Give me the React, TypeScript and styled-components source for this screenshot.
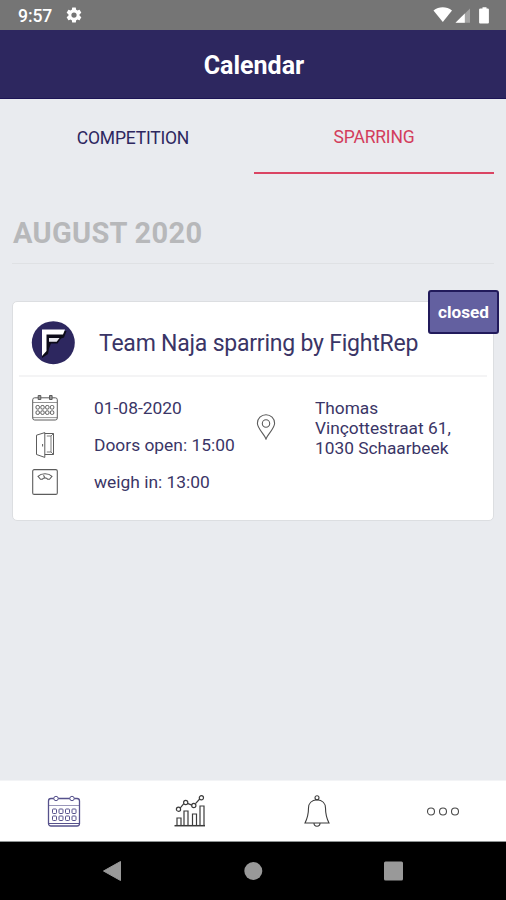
import React from 'react';
import styled, { createGlobalStyle } from 'styled-components';

const navy = '#2d275f';
const ink = '#3a3566';
const line = '#5c5c5c';

const GlobalStyle = createGlobalStyle`
  * { box-sizing: border-box; }
  body { margin: 0; background: #e9ebef; font-family: Roboto, "Liberation Sans", sans-serif; }
  svg { display: block; flex: none; }
`;

const Screen = styled.div`
  width: 506px;
  height: 900px;
  display: flex;
  flex-direction: column;
  overflow: hidden;
  background: #e9ebef;
`;

const StatusBar = styled.div`
  height: 30px;
  flex: none;
  display: flex;
  align-items: center;
  justify-content: space-between;
  padding: 0 15px 0 18px;
  background: #757575;
  color: #fff;
`;

const Clock = styled.span`
  width: 34px;
  font-size: 17.6px;
  font-weight: 500;
  line-height: 20px;
  letter-spacing: -0.1px;
  padding-top: 1px;
`;

const StatusGroup = styled.div<{ $gap: number }>`
  display: flex;
  align-items: center;
  gap: ${p => p.$gap}px;
`;

const Header = styled.header`
  height: 69px;
  flex: none;
  display: flex;
  align-items: center;
  justify-content: center;
  background: ${navy};
  border-bottom: 1px solid #1c1455;
`;

const Title = styled.h1`
  margin: 4px 0 0 2px;
  font-size: 25px;
  line-height: 30px;
  font-weight: 700;
  color: #fff;
`;

const Content = styled.main`
  flex: 1;
  padding: 0 12px;
`;

const Tabs = styled.div`
  display: grid;
  grid-template-columns: 242px 240px;
  height: 75px;
`;

const Tab = styled.div<{ $active?: boolean }>`
  display: flex;
  justify-content: center;
  padding-top: ${p => (p.$active ? 28 : 29)}px;
  font-size: 17.5px;
  letter-spacing: -0.2px;
  line-height: 21px;
  color: ${p => (p.$active ? '#d33d5c' : navy)};
  border-bottom: ${p => (p.$active ? '2px solid #da4463' : '0')};
`;

const Month = styled.h2`
  margin: 0;
  height: 90px;
  padding: 42px 0 0 1px;
  font-size: 29px;
  letter-spacing: 0.3px;
  line-height: 34px;
  font-weight: 700;
  color: #b7b8ba;
  border-bottom: 1px solid #dfe1e4;
`;

const Card = styled.section`
  position: relative;
  height: 220px;
  margin: 37px 0 0;
  padding: 0 6px;
  background: #fff;
  border: 1px solid #dcdee1;
  border-radius: 5px;
`;

const Badge = styled.div`
  position: absolute;
  top: -12px;
  right: -6px;
  width: 71px;
  height: 44px;
  display: flex;
  align-items: center;
  justify-content: center;
  background: #6360a0;
  border: 2px solid #211a5b;
  border-radius: 3px;
  color: #fff;
  font-size: 17.2px;
  font-weight: 700;
`;

const CardHead = styled.div`
  display: flex;
  align-items: center;
  gap: 24px;
  height: 75px;
  padding: 8px 0 0 12px;
  border-bottom: 2px solid #f4f4f5;
`;

const CardTitle = styled.h3`
  margin: 2px 0 0;
  font-size: 23px;
  letter-spacing: -0.22px;
  line-height: 30px;
  font-weight: 400;
  color: ${ink};
  white-space: nowrap;
`;

const CardBody = styled.div`
  display: grid;
  grid-template-columns: 237px 1fr;
  padding-top: 12px;
`;

const Facts = styled.div`
  display: flex;
  flex-direction: column;
`;

const Fact = styled.div`
  height: 37px;
  display: flex;
  align-items: center;
  gap: 36px;
  padding-left: 13px;
  font-size: 17.4px;
  color: ${ink};
  white-space: nowrap;
`;

const Place = styled.div`
  display: flex;
  align-items: flex-start;
  gap: 39px;
  padding-top: 9px;
`;

const PinSlot = styled.div`
  padding-top: 16px;
`;

const Address = styled.address`
  font-style: normal;
  font-size: 17.3px;
  line-height: 20px;
  color: ${ink};
  white-space: nowrap;
`;

const TabBar = styled.nav`
  height: 62px;
  flex: none;
  display: grid;
  grid-template-columns: repeat(4, 1fr);
  place-items: center;
  padding-left: 1px;
  background: #fff;
  border-top: 1px solid #f3f4f6;
  border-bottom: 1px solid #8f9494;
`;

const SystemBar = styled.div`
  height: 58px;
  flex: none;
  display: flex;
  justify-content: space-between;
  padding: 18px 102px 0 102px;
  background: #000;
`;

const Gear = () => (
  <svg width="18" height="18" viewBox="0 0 24 24" fill="#fff">
    <path d="M19.4 13c.04-.3.06-.65.06-1s-.02-.67-.07-1l2.1-1.65a.5.5 0 0 0 .12-.64l-2-3.46a.5.5 0 0 0-.6-.22l-2.5 1a7.3 7.3 0 0 0-1.7-.98l-.37-2.65A.5.5 0 0 0 14 2h-4a.5.5 0 0 0-.48.4l-.37 2.65c-.6.25-1.17.58-1.7.98l-2.48-1a.5.5 0 0 0-.61.22l-2 3.46a.5.5 0 0 0 .12.64L4.6 11a8 8 0 0 0 0 2l-2.12 1.65a.5.5 0 0 0-.12.64l2 3.46c.13.22.38.3.61.22l2.48-1c.52.4 1.08.73 1.7.98l.37 2.65c.04.24.24.4.48.4h4c.24 0 .45-.16.48-.4l.37-2.65c.62-.25 1.18-.58 1.7-.98l2.48 1c.23.08.48 0 .61-.22l2-3.46a.5.5 0 0 0-.12-.64zM12 15.5a3.5 3.5 0 1 1 0-7 3.5 3.5 0 0 1 0 7z" />
  </svg>
);

const Signals = () => (
  <svg width="58" height="20" viewBox="0 0 58 20">
    <path d="M0.5 5.5C6 1.3 13.5 1.3 19 5.5L9.8 17z" fill="#fff" />
    <path d="M37 3.5V17.8H22.5z" fill="#a3a3a3" />
    <path d="M31.8 8.6V17.8H22.5z" fill="#fff" />
    <path d="M47.500 3.500h2V2.300h4v1.200h1.200q1.200 0 1.200 1V17.500q0 1-1 1h-7.800q-1 0-1-1V4.500q0-1 1.400-1z" fill="#fff" />
  </svg>
);

const Logo = () => (
  <svg width="44" height="44" viewBox="0 0 44 44">
    <circle cx="22.3" cy="21.7" r="21.5" fill={navy} />
    <path d="M12 10h23.500l-2.500 6.500-3 1-3.500 5h-6.500l-2 5-1 5.500-6 4z" fill="#0c0b18" />
    <path d="M11 8.500h23L32 13.500H15.500V30L11 35z" fill="#fff" />
    <path d="M18 17h10.500l-2.800 3.700H18z" fill="#e8e8ee" />
  </svg>
);

const SmallCalendar = () => (
  <svg width="26" height="26" viewBox="0 0 26 26" fill="none" stroke={line} strokeWidth="1">
    <rect x="0.7" y="2.8" width="24.6" height="22.2" rx="2" />
    <path d="M1 7.5h24M1 22.6h24" opacity="0.65" />
    <path d="M6.2 0.5h2.6v4H6.2zM17.5 0.5h2.6v4h-2.6z" fill="#999" />
    {[4, 8.8, 13.6, 18.4].map(x =>
      [10.5, 15.8].map(y => <rect key={`${x}-${y}`} x={x} y={y} width="3.4" height="3.6" rx="1.3" />),
    )}
  </svg>
);

const Door = () => (
  <svg width="26" height="26" viewBox="0 0 26 26" fill="none" stroke={line} strokeWidth="1">
    <path d="M12.8 0.6v24.8L4.5 22.5V3.2zM12.8 1.5H21.5V22.5H12.8" />
    <path d="M14.8 4h4.2v16h-4.2M19 4l2.5-2.5M19 20l2.5 2.5" opacity="0.8" />
    <path d="M10.6 12v2.5" />
  </svg>
);

const Scale = () => (
  <svg width="26" height="26" viewBox="0 0 26 26" fill="none" stroke={line} strokeWidth="1.1">
    <rect x="0.7" y="0.6" width="24.6" height="24.8" rx="1.5" />
    <path d="M6 7.3C9.5 3.8 16.5 3.8 20 7.3L17.5 10.3H15.8C14.5 8.6 11.5 8.6 10.2 10.3H8.5z" />
    <path d="M13 8.9l-1.5-2.7" />
  </svg>
);

const Pin = () => (
  <svg width="20" height="26" viewBox="0 0 20 26" fill="none" stroke={line} strokeWidth="1.1">
    <path d="M10 25C8.5 20.5 1.4 14.5 1.4 9.3a8.6 8.6 0 0 1 17.2 0C18.6 14.5 11.5 20.5 10 25z" />
    <circle cx="10" cy="9.5" r="3.7" />
  </svg>
);

const NavCalendar = () => (
  <svg width="34" height="34" viewBox="0 0 34 34" fill="none" stroke="#56518c" strokeWidth="1">
    <rect x="1.5" y="4.5" width="31" height="27.5" rx="2.5" strokeWidth="1.3" />
    <path d="M2 11.5h30" opacity="0.6" />
    <path d="M2 29.5h30" />
    <circle cx="9" cy="4.5" r="2.2" fill="#fff" />
    <circle cx="25" cy="4.5" r="2.2" fill="#fff" />
    {[5.5, 12, 18.5, 25].map(x =>
      [15, 22].map(y => <rect key={`${x}-${y}`} x={x} y={y} width="4" height="4.5" rx="0.8" />),
    )}
  </svg>
);

const NavChart = () => (
  <svg width="34" height="34" viewBox="0 0 34 34" fill="none" stroke="#3c3c3c" strokeWidth="1.2">
    <path d="M1.5 31.7H32" strokeWidth="1.5" />
    <path d="M4 31.5v-7.5h4v7.5M11 31.5V17h4v14.5M19.5 31.5V20h4v11.5M27 31.5V12h4v19.5" />
    <path d="M7.3 13.8l3.5-4.1M14.4 9.4l4.5 1.7M22.5 9.7l4.2-4.7" />
    <circle cx="5.5" cy="15.2" r="2.1" />
    <circle cx="12.7" cy="8.5" r="2.1" />
    <circle cx="20.8" cy="11.5" r="2.1" />
    <circle cx="28.4" cy="3.8" r="2.1" />
  </svg>
);

const NavBell = () => (
  <svg width="34" height="34" viewBox="0 0 34 34" fill="none" stroke="#3c3c3c" strokeWidth="1.1">
    <circle cx="17" cy="3.7" r="2" />
    <path d="M17 5.7C11.5 6 8.5 9.5 8.500 14C8.500 21 7.800 23.500 5 29H29C26.200 23.500 25.500 21 25.500 14C25.500 9.500 22.500 6 17 5.700z" />
    <path d="M14 29c0 4.300 6 4.300 6 0" />
  </svg>
);

const NavMore = () => (
  <svg width="34" height="34" viewBox="0 0 34 34" fill="none" stroke="#4a4a4a" strokeWidth="1.1">
    <circle cx="5" cy="17.5" r="3.5" />
    <circle cx="17" cy="17.5" r="3.5" />
    <circle cx="29" cy="17.5" r="3.5" />
  </svg>
);

const BackKey = () => (
  <svg width="20" height="22" viewBox="0 0 20 22">
    <path d="M1.5 11L18.5 1.5V20.5z" fill="#999" stroke="#999" strokeLinejoin="round" />
  </svg>
);

const HomeKey = () => (
  <svg width="20" height="22" viewBox="0 0 20 22">
    <circle cx="10.3" cy="11" r="9" fill="#999" />
  </svg>
);

const RecentKey = () => (
  <svg width="20" height="22" viewBox="0 0 20 22">
    <rect x="0" y="1.5" width="19" height="19" rx="1.5" fill="#999" />
  </svg>
);

const facts = [
  { icon: <SmallCalendar />, text: '01-08-2020' },
  { icon: <Door />, text: 'Doors open: 15:00' },
  { icon: <Scale />, text: 'weigh in: 13:00' },
];

export default function App() {
  return (
    <Screen>
      <GlobalStyle />
      <StatusBar>
        <StatusGroup $gap={13}>
          <Clock>9:57</Clock>
          <Gear />
        </StatusGroup>
        <Signals />
      </StatusBar>
      <Header>
        <Title>Calendar</Title>
      </Header>
      <Content>
        <Tabs>
          <Tab>COMPETITION</Tab>
          <Tab $active>SPARRING</Tab>
        </Tabs>
        <Month>AUGUST 2020</Month>
        <Card>
          <Badge>closed</Badge>
          <CardHead>
            <Logo />
            <CardTitle>Team Naja sparring by FightRep</CardTitle>
          </CardHead>
          <CardBody>
            <Facts>
              {facts.map(f => (
                <Fact key={f.text}>
                  {f.icon}
                  {f.text}
                </Fact>
              ))}
            </Facts>
            <Place>
              <PinSlot>
                <Pin />
              </PinSlot>
              <Address>
                Thomas
                <br />
                Vinçottestraat 61,
                <br />
                1030 Schaarbeek
              </Address>
            </Place>
          </CardBody>
        </Card>
      </Content>
      <TabBar>
        <NavCalendar />
        <NavChart />
        <NavBell />
        <NavMore />
      </TabBar>
      <SystemBar>
        <BackKey />
        <HomeKey />
        <RecentKey />
      </SystemBar>
    </Screen>
  );
}
